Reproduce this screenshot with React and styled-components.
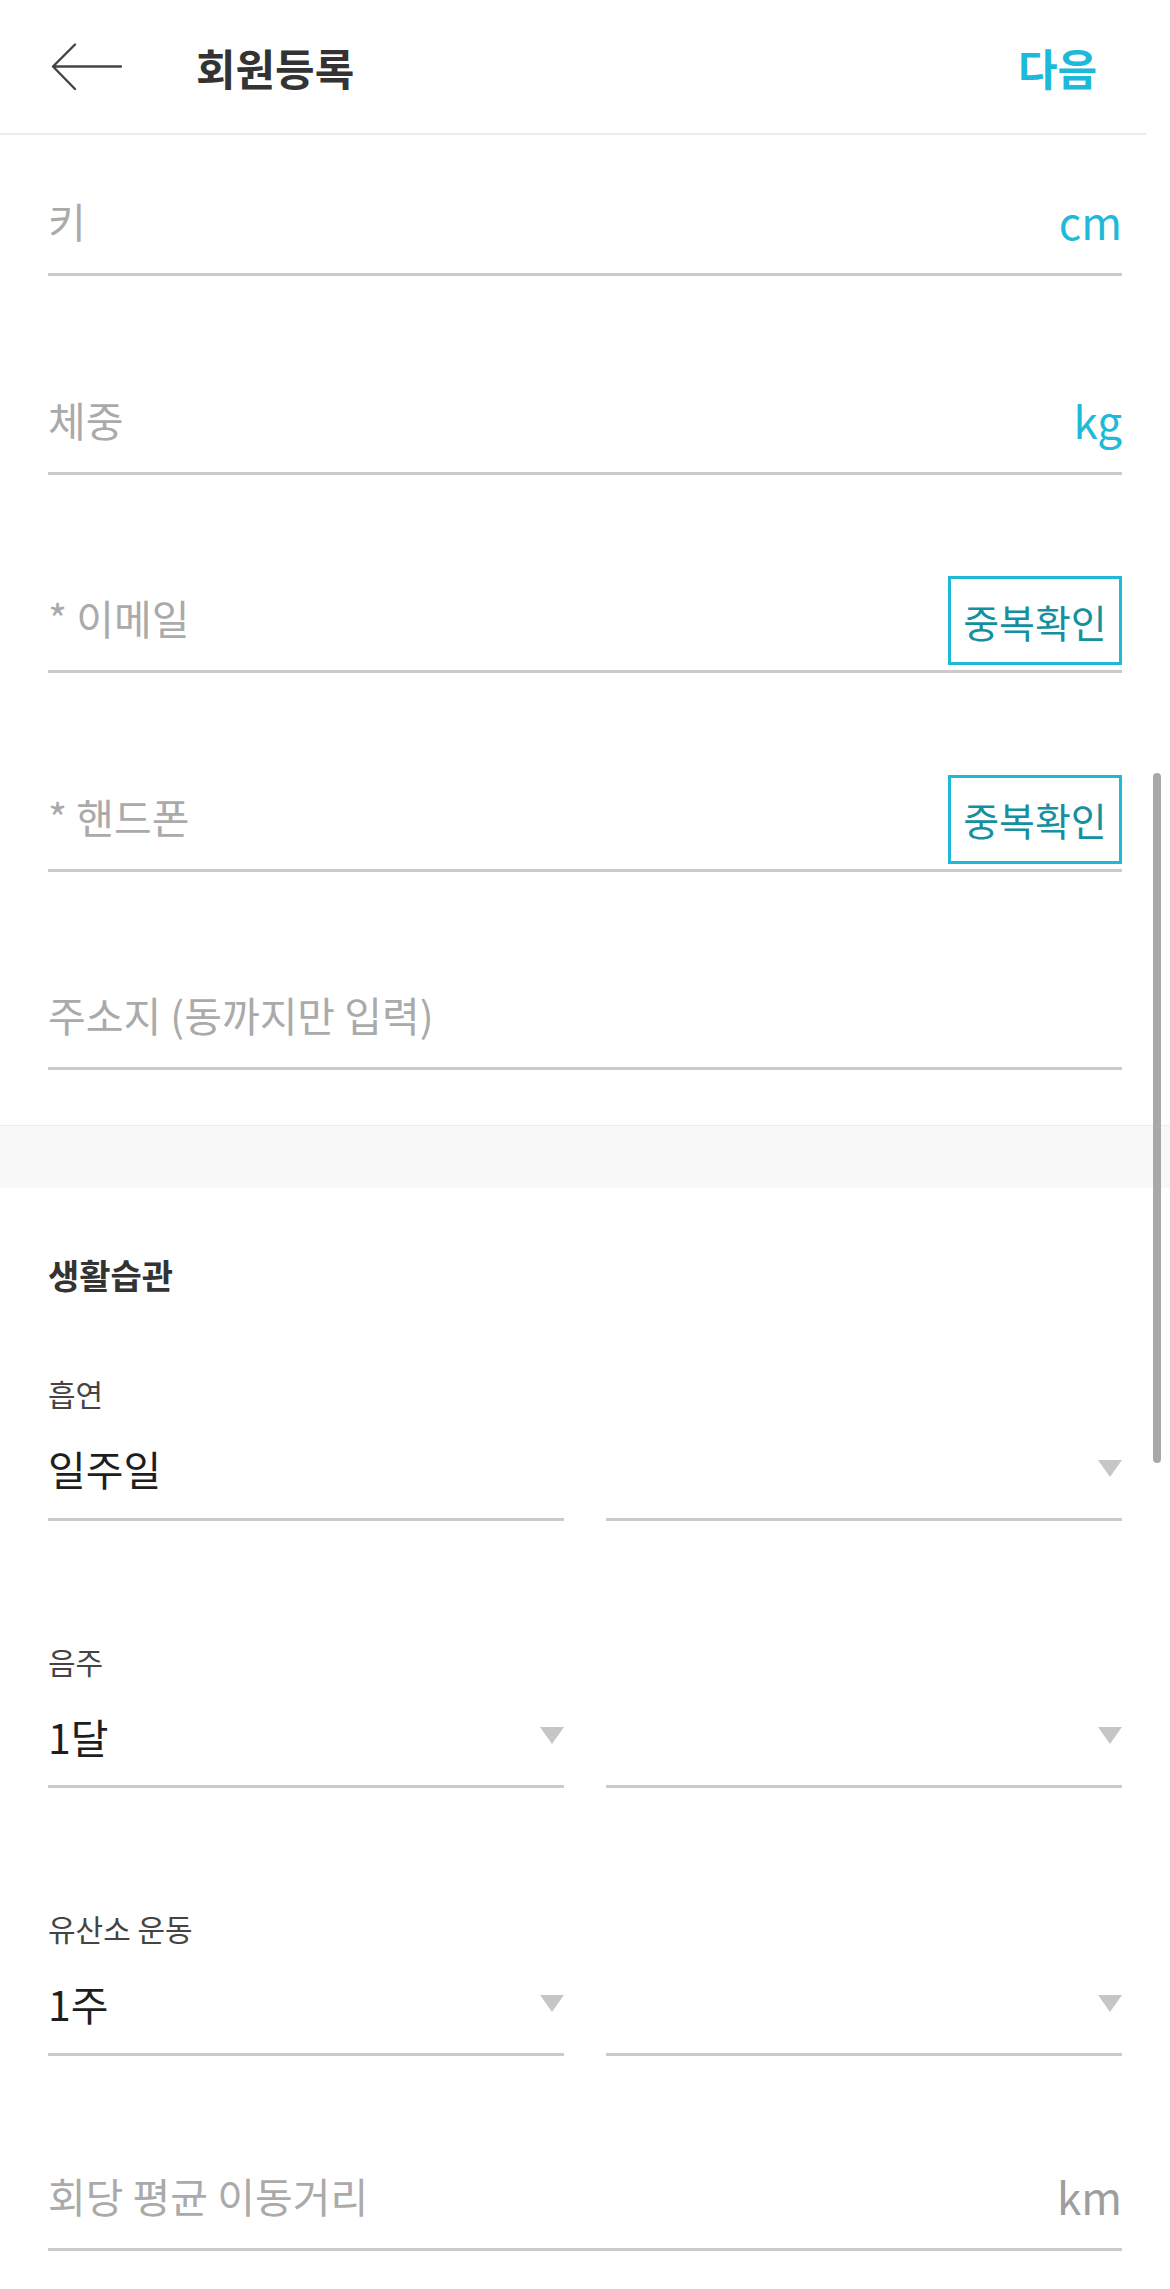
import React from "react";
import styled, { createGlobalStyle } from "styled-components";

const GlobalStyle = createGlobalStyle`
  html, body {
    margin: 0;
    padding: 0;
    background: #ffffff;
  }
  body {
    font-family: "Noto Sans CJK KR", "Noto Sans", sans-serif;
  }
  * {
    box-sizing: border-box;
  }
`;

const Screen = styled.div`
  position: relative;
  width: 1170px;
  min-height: 2289px;
  background: #ffffff;
`;

// 상단 바
const Header = styled.header`
  display: flex;
  align-items: center;
  width: 1146px;
  height: 135px;
  padding: 0 49px 0 50px;
  border-bottom: 2px solid #ebebeb;
`;

const BackButton = styled.button`
  display: flex;
  align-items: center;
  padding: 0;
  border: none;
  background: none;
  cursor: pointer;
`;

const Title = styled.h1`
  flex: 1;
  margin: 0 0 0 74px;
  font-size: 43px;
  font-weight: 700;
  line-height: 60px;
  color: #333333;
`;

const NextButton = styled.button`
  padding: 0;
  border: none;
  background: none;
  font-family: inherit;
  font-size: 43px;
  font-weight: 700;
  line-height: 60px;
  color: #1cb9d8;
  cursor: pointer;
`;

// 입력 폼
const Form = styled.div`
  display: flex;
  flex-direction: column;
  gap: 75.5px;
  padding: 18px 48px 55px;
`;

const InputRow = styled.div`
  display: flex;
  align-items: flex-end;
  justify-content: space-between;
  height: 123px;
  margin-top: ${(p) => p.$offset || 0}px;
  border-bottom: 3px solid #cacaca;
`;

const Placeholder = styled.span`
  margin-bottom: 28px;
  font-size: 41px;
  line-height: 50px;
  color: #aaaaaa;
`;

const Unit = styled.span`
  margin-bottom: 27px;
  font-size: 44px;
  line-height: 50px;
  color: ${(p) => (p.$muted ? "#9e9e9e" : "#1fbad8")};
`;

const CheckButton = styled.button`
  display: flex;
  align-items: center;
  justify-content: center;
  width: 174px;
  height: 89px;
  margin-bottom: 5px;
  padding: 0;
  border: 3px solid #1fb8d6;
  background: #ffffff;
  font-family: inherit;
  font-size: 39px;
  color: #15909f;
  cursor: pointer;
`;

const Divider = styled.div`
  height: 63px;
  background: #f8f8f8;
  border-top: 1px solid #eeeeee;
`;

// 생활습관
const Section = styled.section`
  padding: 65px 48px 0;
`;

const SectionTitle = styled.h2`
  margin: 0;
  font-size: 34px;
  font-weight: 700;
  line-height: 44px;
  color: #333333;
`;

const Group = styled.div`
  margin-top: ${(p) => (p.$first ? 76 : 120)}px;
`;

const GroupLabel = styled.div`
  font-size: 30px;
  line-height: 40px;
  color: #444444;
`;

const SelectRow = styled.div`
  display: grid;
  grid-template-columns: 1fr 1fr;
  gap: 42px;
  margin-top: 30px;
`;

const Select = styled.div`
  display: flex;
  align-items: center;
  justify-content: space-between;
  height: 77.5px;
  padding-bottom: 24.5px;
  border-bottom: 3px solid #cacaca;
`;

const SelectValue = styled.span`
  font-size: 41px;
  line-height: 50px;
  color: #1e1e1e;
`;

const Caret = styled.span`
  width: 0;
  height: 0;
  border-left: 12px solid transparent;
  border-right: 12px solid transparent;
  border-top: 17px solid #c6c6c6;
  visibility: ${(p) => (p.$hidden ? "hidden" : "visible")};
`;

const ScrollThumb = styled.div`
  position: absolute;
  top: 773px;
  right: 9px;
  width: 8px;
  height: 690px;
  border-radius: 4px;
  background: #a8a8a8;
`;

const BackIcon = () => (
  <svg width="72" height="48" viewBox="0 0 72 48" fill="none">
    <path
      d="M71 23.5 H3 M25 1.5 L3 23.5 L25 46"
      stroke="#444444"
      strokeWidth="2.4"
      strokeLinecap="round"
      strokeLinejoin="round"
    />
  </svg>
);

const fields = [
  { label: "키", unit: "cm" },
  { label: "체중", unit: "kg" },
  { label: "* 이메일", check: true },
  { label: "* 핸드폰", check: true },
  { label: "주소지 (동까지만 입력)" },
];

const habits = [
  { label: "흡연", value: "일주일", hideArrow: true },
  { label: "음주", value: "1달" },
  { label: "유산소 운동", value: "1주" },
];

const App = () => {
  return (
    <Screen>
      <GlobalStyle />
      <Header>
        <BackButton aria-label="뒤로">
          <BackIcon />
        </BackButton>
        <Title>회원등록</Title>
        <NextButton>다음</NextButton>
      </Header>

      <Form>
        {fields.map((f) => (
          <InputRow key={f.label}>
            <Placeholder>{f.label}</Placeholder>
            {f.unit && <Unit>{f.unit}</Unit>}
            {f.check && <CheckButton>중복확인</CheckButton>}
          </InputRow>
        ))}
      </Form>

      <Divider />

      <Section>
        <SectionTitle>생활습관</SectionTitle>
        {habits.map((h, i) => (
          <Group key={h.label} $first={i === 0}>
            <GroupLabel>{h.label}</GroupLabel>
            <SelectRow>
              <Select>
                <SelectValue>{h.value}</SelectValue>
                <Caret $hidden={h.hideArrow} />
              </Select>
              <Select>
                <SelectValue />
                <Caret />
              </Select>
            </SelectRow>
          </Group>
        ))}
        <InputRow $offset={72}>
          <Placeholder>회당 평균 이동거리</Placeholder>
          <Unit $muted>km</Unit>
        </InputRow>
      </Section>

      <ScrollThumb />
    </Screen>
  );
};

export default App;
